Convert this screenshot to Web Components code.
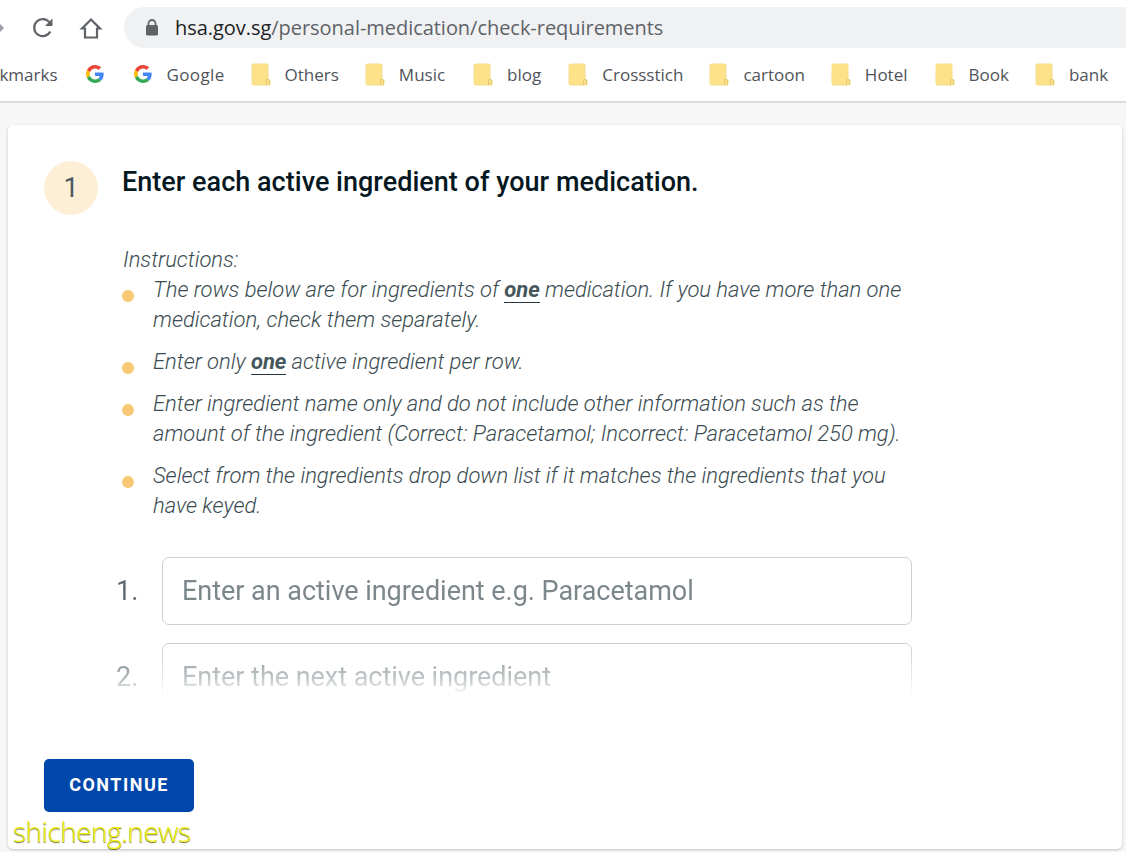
<!DOCTYPE html>
<html><head><meta charset="utf-8">
<style>
html,body{margin:0;padding:0;height:852px;overflow:hidden;background:#f7f7f7}
body{display:flex;flex-direction:column;position:relative}
</style></head><body>
<browser-toolbar></browser-toolbar>
<bookmark-bar>
  <span style="margin-left:-32px;margin-right:28px">Bookmarks</span>
  <book-mark kind="g" style="margin-right:30px"></book-mark>
  <book-mark kind="g" style="margin-right:26px;letter-spacing:.35px">Google</book-mark>
  <book-mark style="margin-right:26px">Others</book-mark>
  <book-mark style="margin-right:28px">Music</book-mark>
  <book-mark style="margin-right:27px">blog</book-mark>
  <book-mark style="margin-right:26px">Crossstich</book-mark>
  <book-mark style="margin-right:26px">cartoon</book-mark>
  <book-mark style="margin-right:27px">Hotel</book-mark>
  <book-mark style="margin-right:26px">Book</book-mark>
  <book-mark>bank</book-mark>
</bookmark-bar>
<step-card>
  <step-head num="1">Enter each active ingredient of your medication.</step-head>
  <instruction-list label="Instructions:">
    <instruction-item>The rows below are for ingredients of <em-one>one</em-one> medication. If you have more than one medication, check them separately.</instruction-item>
    <instruction-item>Enter only <em-one>one</em-one> active ingredient per row.</instruction-item>
    <instruction-item>Enter ingredient name only and do not include other information such as the amount of the ingredient (Correct: Paracetamol; Incorrect: Paracetamol 250 mg).</instruction-item>
    <instruction-item>Select from the ingredients drop down list if it matches the ingredients that you have keyed.</instruction-item>
  </instruction-list>
  <ingredient-rows>
    <ingredient-row num="1.">Enter an active ingredient e.g. Paracetamol</ingredient-row>
    <ingredient-row num="2.">Enter the next active ingredient</ingredient-row>
  </ingredient-rows>
  <continue-button>CONTINUE</continue-button>
</step-card>
<water-mark>shicheng.news</water-mark>
<script>
function def(name,html,init){
  customElements.define(name,class extends HTMLElement{
    constructor(){super();this.attachShadow({mode:'open'}).innerHTML=html;}
    connectedCallback(){if(init)init(this);}
  });
}
const G=`<svg width="18" height="18" viewBox="0 0 48 48"><path fill="#EA4335" d="M24 9.500c3.500 0 6.700 1.200 9.200 3.600l6.900-6.900C35.900 2.400 30.500 0 24 0 14.600 0 6.500 5.400 2.600 13.200l8 6.200C12.500 13.700 17.800 9.500 24 9.500z"/><path fill="#4285F4" d="M47 24.500c0-1.600-.1-3.100-.4-4.500H24v9h12.900c-.6 3-2.200 5.500-4.700 7.200l7.700 6c4.500-4.200 7.100-10.300 7.100-17.700z"/><path fill="#FBBC05" d="M10.600 28.600c-.5-1.500-.8-3-.8-4.600s.3-3.100.8-4.600l-8-6.200C.9 16.500 0 20.100 0 24s.9 7.500 2.600 10.800l8-6.200z"/><path fill="#34A853" d="M24 48c6.500 0 11.900-2.100 15.900-5.800l-7.700-6c-2.200 1.400-4.900 2.300-8.200 2.300-6.200 0-11.500-4.200-13.400-9.900l-8 6.200C6.500 42.600 14.600 48 24 48z"/></svg>`;
const FOLDER=`<svg width="20" height="23" viewBox="0 0 20 23"><path d="M1 2.500Q1 1 2.500 1H16Q17 1 17 2.500V17H19V21Q19 22 18 22H2.500Q1 22 1 20.500Z" fill="#fde28a" stroke="#f3dc8e" stroke-width="1"/><path d="M15.500 22V17.500Q15.500 16.500 17 16.500T18.500 17.500V22" fill="none" stroke="#e2c56c" stroke-width="1"/></svg>`;

def('browser-toolbar',`<style>
:host{display:flex;align-items:center;height:48px;flex:none;background:#fff;position:relative;font:20px "Open Sans","Noto Sans",sans-serif}
.back{width:10px;height:20px;margin-left:-4px;margin-right:25px;flex:none;display:flex}
.btn{flex:none;display:flex;margin-top:7px}
.reload{margin-right:24px}
.home{margin-right:21px}
.omni{flex:1;height:41px;margin-top:7px;background:#f0f1f3;border-radius:21px 0 0 21px;display:flex;align-items:center;padding-left:21px;color:#5f6368;white-space:nowrap;letter-spacing:-.04px}
.omni svg{margin-right:16px;flex:none}
b{font-weight:400;color:#202124}
</style>
<span class="back btn"><svg width="10" height="20" viewBox="0 0 10 20"><path d="M0 4L6 10L0 16" fill="none" stroke="#9aa0a6" stroke-width="3"/></svg></span>
<span class="btn reload"><svg width="24" height="24" viewBox="0 0 24 24"><path d="M19.300 15.500A8.500 8.500 0 1 1 18.400 6.400" fill="none" stroke="#5f6368" stroke-width="2.200"/><path d="M21.500 2.500V10H14Z" fill="#5f6368"/></svg></span>
<span class="btn home"><svg width="24" height="24" viewBox="0 0 24 24"><path d="M3 12.500L12 3.500L21 12.500H18V21.500H6V12.500Z" fill="none" stroke="#5f6368" stroke-width="2.200" stroke-linejoin="miter"/></svg></span>
<div class="omni"><svg width="14" height="17" viewBox="0 0 14 17"><path d="M3.500 7V4.500a3.500 3.500 0 0 1 7 0V7" fill="none" stroke="#5f6368" stroke-width="1.800"/><rect x="1" y="6" width="12" height="10.500" rx="1.500" fill="#5f6368"/></svg><span><b>hsa.gov.sg</b>/personal-medication/check-requirements</span></div>`);

def('bookmark-bar',`<style>
:host{display:flex;align-items:center;flex:none;background:#fff;border-bottom:2px solid #dcdcdc;box-sizing:border-box;height:55px;padding-bottom:1px;overflow:hidden;white-space:nowrap;font:17px "Open Sans","Noto Sans",sans-serif;color:#50545a}
</style><slot></slot>`);

def('book-mark',`<style>
:host{display:inline-flex;align-items:center;gap:14px;margin-right:27px;flex:none}
span.i{display:flex}
</style><span class="i"></span><slot></slot>`,el=>{
  el.shadowRoot.querySelector('.i').innerHTML=el.getAttribute('kind')==='g'?G:FOLDER;
  if(!el.textContent.trim())el.shadowRoot.querySelector('slot').remove();
  else if(el.getAttribute('kind')==='g')el.style.gap='15px';
});

def('step-card',`<style>
:host{display:flex;flex-direction:column;flex:none;box-sizing:border-box;margin:22px 4px 0 8px;height:724px;background:#fff;border-radius:5px;box-shadow:0 1px 3px rgba(0,0,0,.22);padding:36px 0 0 36px;font-family:Roboto,sans-serif}
</style><slot></slot>`);

def('step-head',`<style>
:host{display:flex;align-items:flex-start;gap:24px;height:54px}
.c{width:54px;height:54px;border-radius:50%;background:#fcefd6;color:#4a5a60;font-size:27px;display:flex;align-items:center;justify-content:center;flex:none}
.t{font-size:27px;font-weight:500;color:#06181f;line-height:42px;letter-spacing:.02px}
</style><div class="c"></div><div class="t"><slot></slot></div>`,el=>{el.shadowRoot.querySelector('.c').textContent=el.getAttribute('num');});

def('instruction-list',`<style>
:host{display:block;margin:30px 0 0 78px;width:790px;font-size:22px;font-style:italic;font-weight:300;line-height:30px;color:#3a4b51;letter-spacing:-.03px}
.l{height:30px;padding-left:1px}
.b{display:flex;flex-direction:column;gap:12px}
</style><div class="l"></div><div class="b"><slot></slot></div>`,el=>{el.shadowRoot.querySelector('.l').textContent=el.getAttribute('label');});

def('instruction-item',`<style>
:host{display:block;position:relative;padding-left:31px}
:host::before{content:"";position:absolute;left:0;top:15px;width:12px;height:12px;border-radius:50%;background:#f8c874}
</style><slot></slot>`);

def('em-one',`<style>
:host{display:inline-block;font-weight:700;line-height:24px;border-bottom:1.500px solid #26363c;color:#45565c}
</style><slot></slot>`);

def('ingredient-rows',`<style>
:host{display:flex;flex-direction:column;gap:18px;margin:36px 0 0 0;height:139px;overflow:hidden;-webkit-mask-image:linear-gradient(to bottom,#000 0,#000 86px,rgba(0,0,0,.45) 122px,transparent 139px);mask-image:linear-gradient(to bottom,#000 0,#000 86px,rgba(0,0,0,.45) 122px,transparent 139px)}
</style><slot></slot>`);

def('ingredient-row',`<style>
:host{display:flex;align-items:center;flex:none;height:68px;width:868px}
.n{width:118px;box-sizing:border-box;padding-left:72px;font-size:27px;color:#5c6b70;flex:none}
.f{flex:1;height:68px;box-sizing:border-box;border:1px solid #cfcfcf;border-radius:7px;display:flex;align-items:center;padding-left:19px;font-size:27px;letter-spacing:-.03px;color:#7b878b;background:#fff}
</style><div class="n"></div><div class="f"><slot></slot></div>`,el=>{el.shadowRoot.querySelector('.n').textContent=el.getAttribute('num');});

def('continue-button',`<style>
:host{display:flex;align-items:center;justify-content:center;width:150px;height:53px;margin-top:63px;padding-bottom:2px;background:#0047ab;border-radius:5px;color:#fff;font-size:18px;font-weight:700;letter-spacing:1.500px;box-sizing:border-box}
</style><slot></slot>`);

def('water-mark',`<style>
:host{position:absolute;left:13px;top:813px;font:300 28px/36px "Open Sans",sans-serif;color:#f5f510;letter-spacing:-.5px;text-shadow:0 1px 1px #6a6a30}
</style><slot></slot>`);
</script>
</body></html>
